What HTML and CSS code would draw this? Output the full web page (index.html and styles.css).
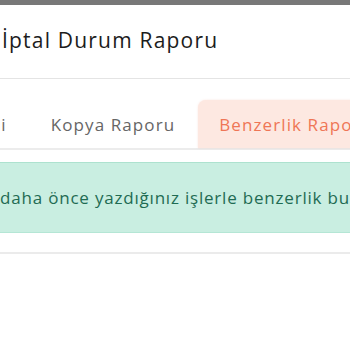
FILE: index.html
```html
<!DOCTYPE html>
<html lang="tr">

<head>
    <meta charset="UTF-8">
    <meta name="viewport" content="width=device-width, initial-scale=1.0">
    <title>İptal Durum Raporu</title>
    <link rel="stylesheet" href="styles.css">
</head>

<body>
    <div class="topbar"></div>
    <div class="card">
        <div class="card-header">
            <h4 class="card-title">İptal Durum Raporu</h4>
        </div>
        <div class="card-body">
            <ul class="tabs">
                <li class="tab tab-first">Ödev Metni</li>
                <li class="tab">Kopya Raporu</li>
                <li class="tab active">Benzerlik Raporu</li>
            </ul>
            <div class="alert">
                daha önce yazdığınız işlerle benzerlik bulunmamaktadır.
            </div>
            <div class="section"></div>
        </div>
    </div>
</body>

</html>
```

FILE: styles.css
```css
* {
    margin: 0;
    padding: 0;
    box-sizing: border-box;
}

html,
body {
    overflow: hidden;
    background: #fff;
}

body {
    font-family: "Open Sans", "Liberation Sans", sans-serif;
    width: 350px;
    height: 350px;
}

.topbar {
    height: 5px;
    background: #787878;
}

.card {
    width: 760px;
    margin-left: -24px;
}

.card-header {
    height: 74px;
    padding: 0 26px 3px;
    display: flex;
    align-items: center;
    border-bottom: 1px solid #e4e4e4;
}

.card-title {
    font-size: 21px;
    font-weight: 400;
    color: #1c1c1c;
    letter-spacing: 1.2px;
}

.card-body {
    padding-top: 21px;
}

.tabs {
    list-style: none;
    display: flex;
    border-bottom: 2px solid #ececec;
}

.tab {
    height: 48px;
    padding: 0 23px 0 21px;
    display: flex;
    align-items: center;
    font-size: 17px;
    color: #666;
    letter-spacing: 1.1px;
    border-radius: 8px 8px 0 0;
}

.tab-first {
    margin-left: -93px;
}

.tab.active {
    background: #fde8e1;
    color: #ef7656;
    box-shadow: 0 0 2px rgba(240, 140, 110, 0.25);
}

.alert {
    margin-top: 12px;
    height: 71px;
    padding: 0 24px;
    display: flex;
    align-items: center;
    background: #c9eee1;
    border-top: 1px solid #ade2cf;
    border-bottom: 1px solid #b5e6d5;
    font-size: 17px;
    color: #1f6b53;
    letter-spacing: 0.8px;
}

.section {
    margin-top: 19px;
    border-top: 2px solid #ebebeb;
}
```
